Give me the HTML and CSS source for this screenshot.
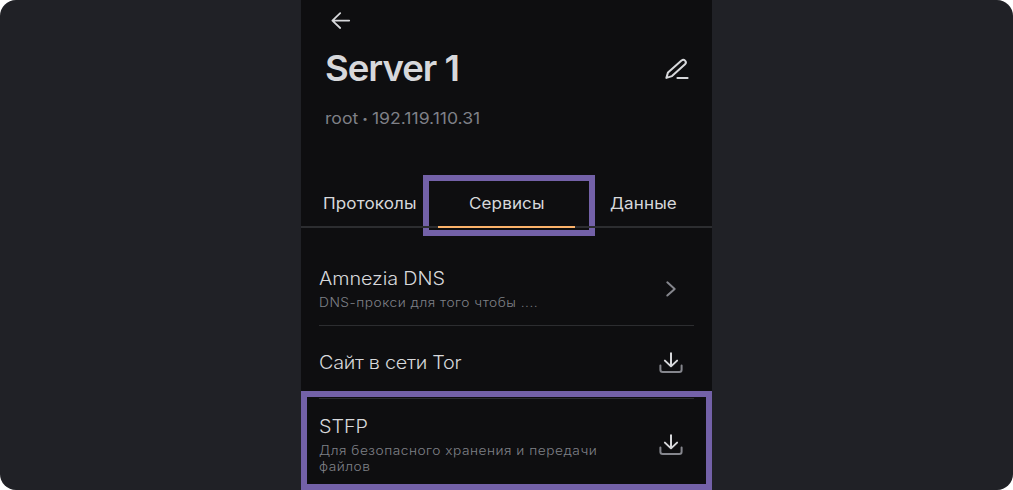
FILE: index.html
```html
<!DOCTYPE html>
<html lang="ru">
<head>
<meta charset="utf-8">
<title>Server 1</title>
<link rel="stylesheet" href="styles.css">
</head>
<body>
<main class="stage">
  <section class="phone">
    <header class="header">
      <svg class="back" width="24" height="24" viewBox="0 0 24 24"><path d="M12.2 5.2 4.4 12.6l7.8 7.4M4.4 12.6H21.2"/></svg>
      <div class="title-row">
        <h1 class="title"><span class="wide">Server 1</span></h1>
        <svg class="edit" width="26" height="24" viewBox="0 0 26 24"><path d="M2.4 20.9 4 15.4 17.5 3.6a2.4 2.4 0 0 1 3.5 3.6L8 19.1ZM13.4 20.9H23.6"/></svg>
      </div>
      <p class="address"><span class="wide">root<span class="dot">•</span>192.119.110.31</span></p>
    </header>
    <nav class="tabs">
      <a class="tab tab-protocols"><span class="wide">Протоколы</span></a>
      <a class="tab tab-services active"><span class="wide">Сервисы</span></a>
      <a class="tab tab-data"><span class="wide">Данные</span></a>
    </nav>
    <div class="list">
      <article class="row row-dns">
        <div class="text">
          <h2 class="name"><span class="wide">Amnezia DNS</span></h2>
          <p class="note"><span class="wide">DNS-прокси для того чтобы ....</span></p>
        </div>
        <svg class="icon" width="26" height="24" viewBox="0 0 26 24"><path class="dim" d="m9.3 5.3 7.4 6.6-7.4 6.6"/></svg>
      </article>
      <article class="row row-tor">
        <div class="text">
          <h2 class="name"><span class="wide tor">Сайт в сети Tor</span></h2>
        </div>
        <svg class="icon" width="26" height="24" viewBox="0 0 26 24"><path class="dim" d="M2.4 14.6v4.2q0 2.2 2.3 2.2h16.6q2.3 0 2.3-2.2v-4.2"/><path d="M13 2.3v13M6.9 9.6l6.1 5.8 6.1-5.8"/></svg>
      </article>
      <article class="row row-sftp">
        <div class="text">
          <h2 class="name"><span class="wide">STFP</span></h2>
          <p class="note"><span class="wide">Для безопасного хранения и передачи<br>файлов</span></p>
        </div>
        <svg class="icon" width="26" height="24" viewBox="0 0 26 24"><path class="dim" d="M2.4 14.6v4.2q0 2.2 2.3 2.2h16.6q2.3 0 2.3-2.2v-4.2"/><path d="M13 2.3v13M6.9 9.6l6.1 5.8 6.1-5.8"/></svg>
      </article>
    </div>
    <div class="highlight highlight-tab"></div>
    <div class="highlight highlight-row"></div>
  </section>
</main>
</body>
</html>
```
FILE: styles.css
```css
* { box-sizing: border-box; }
body { margin: 0; background: #fff; font-family: Inter, "Noto Sans", sans-serif; color: #d7d8db; }
h1, h2, p { margin: 0; font-weight: 400; white-space: nowrap; }
svg { display: block; flex: none; fill: none; stroke: #d7d8db; stroke-width: 2; stroke-linecap: round; stroke-linejoin: round; }
.stage { width: 1013px; height: 490px; border-radius: 16px; background: #202126; display: flex; justify-content: center; overflow: hidden; }
.phone { position: relative; width: 411px; height: 490px; background: #0e0e10; display: flex; flex-direction: column; }
.wide { display: inline-block; transform: scaleX(1.1); transform-origin: 0 50%; }
.header { height: 175px; padding: 8px 22px 0 24px; }
.back { margin-left: 3px; stroke-width: 1.8; }
.title-row { display: flex; justify-content: space-between; margin-top: 13px; height: 48px; align-items: center; }
.title { font-size: 35.5px; line-height: 48px; font-weight: 600; letter-spacing: -1px; }
.title .wide { transform: scaleX(1.03); }
.address { margin-top: 15px; font-size: 16px; line-height: 20px; color: #7f8087; }
.address .wide { display: inline-flex; }
.dot { width: 12.5px; text-align: center; font-size: 9px; line-height: 21px; }
.tabs { position: relative; z-index: 2; height: 53px; border-bottom: 2px solid #2c2d30; display: flex; padding: 0 0 0 22px; }
.tab { height: 53px; padding-top: 18px; font-size: 15.5px; line-height: 21px; font-weight: 400; letter-spacing: 0.1px; white-space: nowrap; }
.tab-protocols { width: 115px; }
.tab-services { width: 137px; padding-left: 31px; border-bottom: 2px solid #fbb26a; }
.tab-data { padding-left: 34.5px; }
.list { padding: 0 18px; }
.row { display: flex; justify-content: space-between; border-bottom: 1px solid #2c2d30; }
.row-dns { height: 98px; padding-top: 39px; }
.row-tor { height: 73px; padding-top: 25px; }
.row-sftp { flex: none; height: 91px; padding-top: 16px; }
.name { font-size: 18px; line-height: 24px; font-weight: 350; letter-spacing: -0.1px; }
.tor { letter-spacing: -0.25px; }
.note { margin-top: 4px; font-size: 12.5px; line-height: 16px; letter-spacing: 0.45px; font-weight: 350; color: #7f8087; }
.icon { margin-right: 10px; }
.row-dns .icon { margin-top: 10px; }
.row-sftp .icon { margin-top: 18px; }
.dim { stroke: #85868d; }
.highlight { position: absolute; border: 6px solid #7361a8; }
.highlight-tab { left: 122px; top: 175px; width: 172px; height: 61px; }
.highlight-row { left: 0; top: 391px; width: 411px; height: 99px; }
```
